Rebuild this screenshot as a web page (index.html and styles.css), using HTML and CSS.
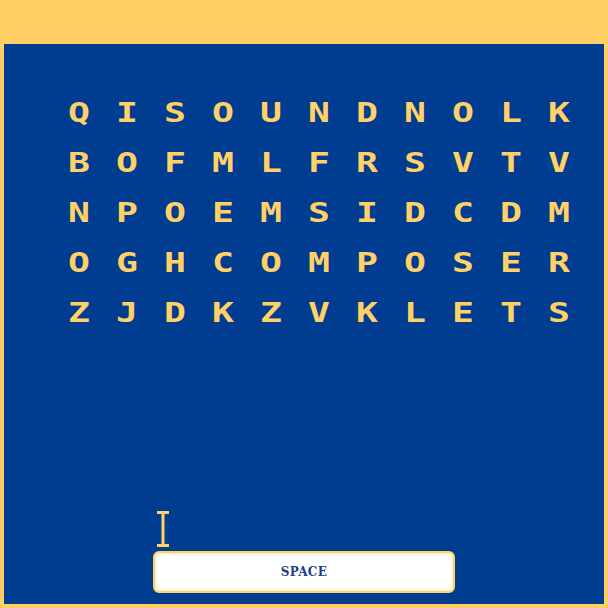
FILE: index.html
```html
<!DOCTYPE html>
<html lang="en">
<head>
<meta charset="utf-8">
<title>Word Search</title>
<link rel="stylesheet" href="styles.css">
</head>
<body>
<div class="top-bar"></div>
<main class="panel">
  <div class="grid">
    <span>Q</span><span>I</span><span>S</span><span>O</span><span>U</span><span>N</span><span>D</span><span>N</span><span>O</span><span>L</span><span>K</span>
    <span>B</span><span>O</span><span>F</span><span>M</span><span>L</span><span>F</span><span>R</span><span>S</span><span>V</span><span>T</span><span>V</span>
    <span>N</span><span>P</span><span>O</span><span>E</span><span>M</span><span>S</span><span>I</span><span>D</span><span>C</span><span>D</span><span>M</span>
    <span>O</span><span>G</span><span>H</span><span>C</span><span>O</span><span>M</span><span>P</span><span>O</span><span>S</span><span>E</span><span>R</span>
    <span>Z</span><span>J</span><span>D</span><span>K</span><span>Z</span><span>V</span><span>K</span><span>L</span><span>E</span><span>T</span><span>S</span>
  </div>
  <div class="input-area">
    <svg class="cursor" width="12" height="36" viewBox="0 0 12 36">
      <rect x="0" y="0" width="12" height="3" fill="#ffd166"/>
      <rect x="4.5" y="0" width="3" height="36" fill="#ffd166"/>
      <rect x="0" y="33" width="12" height="3" fill="#ffd166"/>
    </svg>
    <button class="space-btn">SPACE</button>
  </div>
</main>
</body>
</html>
```
FILE: styles.css
```css
html, body {
  margin: 0;
  padding: 0;
  background: #ffcf66;
}
body {
  width: 608px;
  height: 608px;
  overflow: hidden;
}
.top-bar {
  height: 44px;
}
.panel {
  margin: 0 4px;
  width: 600px;
  height: 560px;
  background: #003c8f;
  display: flex;
  flex-direction: column;
}
.grid {
  margin: 43px 0 0 51px;
  display: grid;
  grid-template-columns: repeat(11, 48px);
  grid-auto-rows: 50px;
}
.grid span {
  display: flex;
  align-items: center;
  justify-content: center;
  color: #ffd166;
  font-family: "DejaVu Sans Mono", monospace;
  font-weight: bold;
  font-size: 27px;
  line-height: 1;
  transform: scaleX(1.35);
}
.input-area {
  margin-top: auto;
  padding: 0 0 11px 149px;
  display: flex;
  flex-direction: column;
  align-items: flex-start;
}
.cursor {
  display: block;
  margin: 0 0 4px 4px;
}
.space-btn {
  width: 302px;
  height: 42px;
  box-sizing: border-box;
  background: #ffffff;
  border: 2px solid #ffd166;
  border-radius: 6px;
  box-shadow: inset 0 0 3px #ffd166;
  font-family: "DejaVu Serif", serif;
  font-weight: bold;
  font-size: 12px;
  letter-spacing: 0.3px;
  color: #1d3f8a;
  padding: 0;
  cursor: text;
}
```
